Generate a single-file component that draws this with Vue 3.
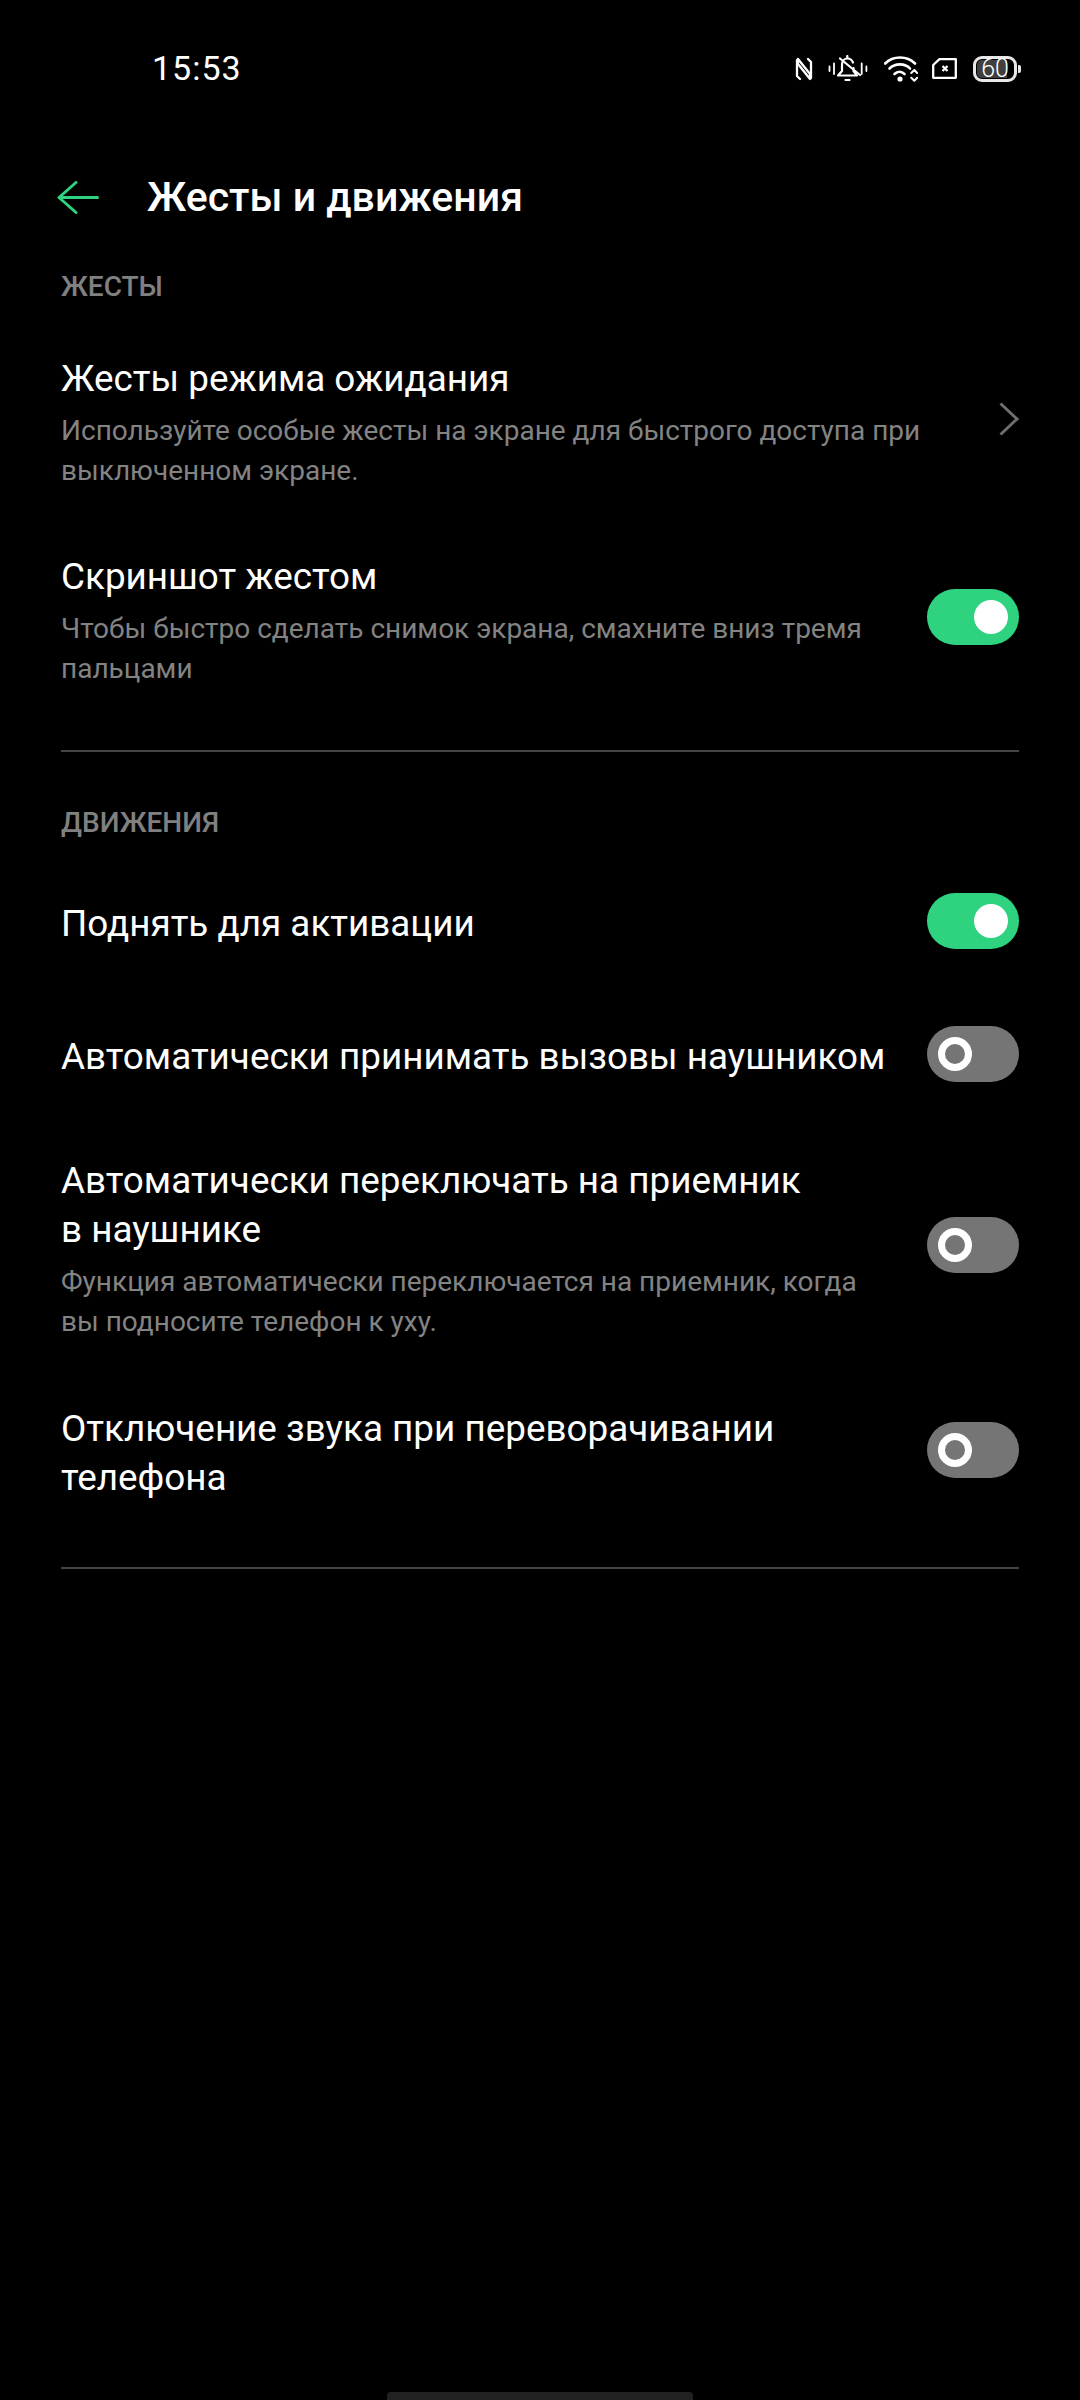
<script setup>
const blocks = [
  {
    head: 'ЖЕСТЫ',
    rows: [
      { title: 'Жесты режима ожидания', sub: 'Используйте особые жесты на экране для быстрого доступа при выключенном экране.', kind: 'chevron', cls: 'r1' },
      { title: 'Скриншот жестом', sub: 'Чтобы быстро сделать снимок экрана, смахните вниз тремя пальцами', kind: 'on', cls: 'r2' },
    ],
  },
  {
    head: 'ДВИЖЕНИЯ',
    rows: [
      { title: 'Поднять для активации', kind: 'on', cls: 'r3' },
      { title: 'Автоматически принимать вызовы наушником', kind: 'off', cls: 'r4' },
      { title: 'Автоматически переключать на приемник в\u00a0наушнике', sub: 'Функция автоматически переключается на приемник, когда вы подносите телефон к уху.', kind: 'off', cls: 'r5' },
      { title: 'Отключение звука при переворачивании телефона', kind: 'off', cls: 'r6' },
    ],
  },
]
</script>

<template>
  <div class="page">
    <div class="status">
      <span class="time">15:53</span>
      <div class="icons">
        <svg width="18" height="24" viewBox="0 0 18 24" fill="none" stroke="#fff" stroke-width="2.3" stroke-linejoin="round" stroke-linecap="round">
          <path d="M5 22 L2 19 V3.5 L3 2 L15 17 V20" />
          <path d="M13 2 L16 5 V21 L15 22 L3 7 V5" />
        </svg>
        <svg width="40" height="27" viewBox="0 0 40 27" fill="none" stroke="#fff" stroke-width="2.2" stroke-linecap="round" stroke-linejoin="round">
          <path d="M1.5 11.5 V16 M6 8.5 V19 M33.7 8.5 V19 M38.4 11.5 V16" stroke-width="1.8" />
          <path d="M10 20.5 H29 M10 20.5 L14 16 V10 C14 6 16.5 3.5 19.5 3.5 C22 3.5 24 5 25 7.5 M25.5 13 V16 L29 20.5" />
          <path d="M19.3 1 V3 M12 3.5 L32 20 M17.5 25 H21.5" />
        </svg>
        <svg width="34" height="26" viewBox="0 0 34 26" fill="none" stroke="#fff" stroke-linecap="round" stroke-linejoin="round">
          <path d="M1.2 7.5 C9 -0.5 23 -0.5 31 7.5" stroke-width="2.6" />
          <path d="M5.5 12.5 C11 7 21 7 26 12.5" stroke-width="2.6" />
          <path d="M10.5 18 C13.5 15 17.5 15 20.5 18" stroke-width="2.6" />
          <circle cx="16" cy="23" r="2.6" fill="#fff" stroke="none" />
          <path d="M27.3 17 L30.3 14 L33.2 17 M27.3 21.7 L30.3 24.7 L33.2 21.7" stroke-width="2" />
        </svg>
        <svg width="25" height="21" viewBox="0 0 25 21" fill="none" stroke="#fff">
          <path d="M1.2 7 L7.5 1.2 H23.8 V19.8 H1.2 Z" stroke-width="2.3" stroke-linejoin="round" />
          <path d="M10.5 8 L15.5 13 M15.5 8 L10.5 13" stroke-width="2.2" />
        </svg>
        <div class="battery">
          <span class="fill"></span>
          <span class="level">60</span>
          <span class="cap"></span>
        </div>
      </div>
    </div>

    <div class="appbar">
      <svg class="back" width="42" height="33" viewBox="0 0 42 33" fill="none" stroke="#2fd27f" stroke-width="3" stroke-linecap="round" stroke-linejoin="round">
        <path d="M2 16.5 H40.5 M19 1.5 L2 16.5 L19 31.5" />
      </svg>
      <h1>Жесты и движения</h1>
    </div>

    <section v-for="(b, i) in blocks" :key="b.head" :class="['block', 'b' + i]">
      <h2>{{ b.head }}</h2>
      <div v-for="r in b.rows" :key="r.title" :class="['row', r.cls]">
        <div class="text">
          <div class="title">{{ r.title }}</div>
          <div v-if="r.sub" class="sub">{{ r.sub }}</div>
        </div>
        <svg v-if="r.kind === 'chevron'" class="chev" width="20" height="34" viewBox="0 0 20 34" fill="none" stroke="#6f6f6f" stroke-width="3">
          <path d="M1.5 1.5 L18 17 L1.5 32.5" />
        </svg>
        <div v-else :class="['toggle', r.kind]"><span class="thumb"></span></div>
      </div>
      <div class="divider"></div>
    </section>

    <div class="home"></div>
  </div>
</template>

<style>
html, body { margin: 0; background: #000; }
</style>

<style scoped>
.page {
  position: relative;
  width: 1080px;
  height: 2400px;
  overflow: hidden;
  background: #000;
  color: #fff;
  font-family: Roboto, "Noto Sans", sans-serif;
}
.status {
  display: flex;
  align-items: center;
  justify-content: space-between;
  height: 137px;
  padding: 0 59px 0 152px;
  box-sizing: border-box;
}
.time { font-size: 34px; font-weight: 400; letter-spacing: 1px; margin-bottom: 2px; }
.icons { display: flex; align-items: center; }
.icons svg:nth-child(1) { margin-right: 15px; }
.icons svg:nth-child(2) { margin-right: 16px; }
.icons svg:nth-child(3) { margin-right: 14px; }
.icons svg:nth-child(4) { margin-right: 16px; }
.battery {
  position: relative;
  width: 44px;
  height: 26px;
  margin-right: 4px;
  box-sizing: border-box;
  border: 3px solid #e8e8e8;
  border-radius: 9px;
}
.fill { position: absolute; left: 1px; top: 1px; bottom: 1px; width: 30px; background: #3f3f3f; border-radius: 5px 0 0 5px; }
.level { position: absolute; inset: 0; text-align: center; font-size: 25px; line-height: 20px; font-weight: 300; }
.cap { position: absolute; right: -7px; top: 6px; width: 3px; height: 8px; background: #e8e8e8; border-radius: 0 2px 2px 0; }
.appbar {
  display: flex;
  align-items: center;
  height: 120px;
  padding-left: 57px;
}
.back { margin-right: 48px; }
h1 { margin: 0; font-size: 41px; font-weight: 500; line-height: 48px; }
.block { padding: 0 61px; }
h2 {
  margin: 0;
  font-size: 28px;
  font-weight: 500;
  line-height: 32px;
  color: #808080;
}
.b0 { padding-top: 14px; }
.b1 { padding-top: 55px; }
.row { display: flex; align-items: center; justify-content: space-between; }
.text { flex: none; width: 820px; padding-top: 5px; }
.title { font-size: 36.85px; line-height: 49px; }
.sub { margin-top: 8px; font-size: 28px; line-height: 39.6px; color: #838383; }
.r1 { margin-top: 44px; }
.r2 { margin-top: 55px; }
.r3 { margin-top: 54px; }
.r4 { margin-top: 77px; }
.r5 { margin-top: 67px; }
.r6 { margin-top: 56px; }
.r1 .text { width: 880px; }
.r1 .text, .r2 .text, .r5 .text { padding-top: 7px; }
.r6 .text { padding-top: 6px; }
.r4 .text { white-space: nowrap; }
.chev { flex: none; }
.divider { height: 2px; background: #454545; }
.b0 .divider { margin-top: 62px; }
.b1 .divider { margin-top: 65px; }
.toggle {
  position: relative;
  flex: none;
  width: 92px;
  height: 56px;
  border-radius: 28px;
}
.toggle.on { background: #2fd27f; }
.toggle.off { background: #757575; }
.thumb { position: absolute; top: 11px; width: 34px; height: 34px; border-radius: 50%; box-sizing: border-box; }
.on .thumb { right: 11px; background: #fff; }
.off .thumb { left: 11px; border: 7px solid #fff; background: #757575; }
.home {
  position: absolute;
  left: 387px;
  bottom: 0;
  width: 306px;
  height: 8px;
  background: #222;
  border-radius: 4px 4px 0 0;
}
</style>
